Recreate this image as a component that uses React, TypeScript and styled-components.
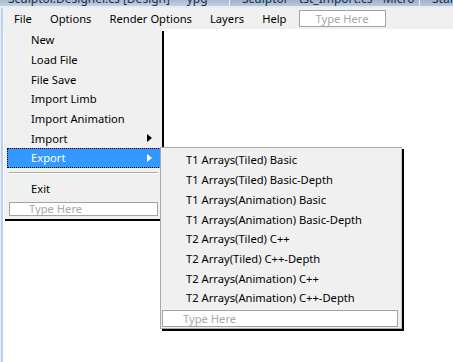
import React from 'react';
import styled, { createGlobalStyle } from 'styled-components';

const Global = createGlobalStyle`
  html, body { margin: 0; padding: 0; background: #fff; }
  body {
    width: 453px; height: 362px; overflow: hidden;
    font-family: "Noto Sans", "Open Sans", sans-serif;
    font-size: 11.2px; color: #000;
  }
`;

const Window = styled.div`
  display: flex; flex-direction: column;
  width: 453px; height: 362px; overflow: hidden;
`;

const TitleStrip = styled.div`
  height: 6px; display: flex; overflow: hidden;
  background: linear-gradient(#a9bbd0, #c2d0e0);
  border-bottom: 2px solid #e4ecf5;
`;

const TitleTab = styled.div<{ $w?: number; $tab?: boolean }>`
  flex: ${p => (p.$w ? 'none' : '1')};
  width: ${p => (p.$w ? `${p.$w}px` : 'auto')};
  display: flex; align-items: flex-end; overflow: hidden;
  padding-left: ${p => (p.$tab ? 12 : 8)}px;
  box-sizing: border-box;
  background: ${p => (p.$tab ? 'linear-gradient(#9fb3cb, #b7c8db)' : 'transparent')};
  border-left: ${p => (p.$tab ? '1px solid #e8eef6' : 'none')};
  span {
    line-height: 13px; font-size: 12px; color: #1b2f4b; white-space: nowrap;
    margin-bottom: 1px;
  }
`;

const Frame = styled.div`
  flex: 1; display: flex; min-height: 0;
`;

const LeftEdge = styled.div`
  width: 2px; flex: none;
  border-left: 1px solid #e6edf5;
  background: #bad3ee;
`;

const Content = styled.div`
  flex: 1; display: flex; flex-direction: column; min-width: 0;
`;

const MenuBar = styled.div`
  height: 21px; flex: none; display: flex; align-items: center;
  background: #f0f0f0; padding-left: 2px;
`;

const BarItem = styled.div`
  padding: 0 9px; white-space: nowrap;
`;

const TypeBox = styled.div<{ $w?: number; $h: number; $pad?: number; $center?: boolean; $ml: number; $mr?: number; $mt?: number }>`
  box-sizing: border-box;
  width: ${p => (p.$w ? `${p.$w}px` : 'auto')};
  height: ${p => p.$h}px;
  margin: ${p => p.$mt ?? 0}px ${p => p.$mr ?? 0}px 0 ${p => p.$ml}px;
  border: 1px solid #a3a3a3; background: #fff;
  color: #a8a8a8; white-space: nowrap;
  display: flex; align-items: center;
  justify-content: ${p => (p.$center ? 'center' : 'flex-start')};
  padding-left: ${p => p.$pad ?? 0}px;
  overflow: hidden;
`;

const Canvas = styled.div`
  flex: 1; background: #fff; position: relative;
`;

const Dropdown = styled.div`
  position: absolute; left: 0; top: 0; z-index: 2;
  width: 159px; box-sizing: border-box;
  background: #f0f0f0;
  border-left: 1px solid #fafafa;
  box-shadow: 2px 2px 0 #000;
  padding: 1px 0 3px;
  display: flex; flex-direction: column;
`;

const Item = styled.div<{ $active?: boolean; $sub?: boolean }>`
  position: relative;
  height: 19.7px; box-sizing: border-box; flex: none;
  margin: ${p => (p.$sub ? '0' : '0 1px 0 3px')};
  padding-left: ${p => (p.$sub ? 24 : 23)}px;
  display: flex; align-items: center; white-space: nowrap;
  border: 1px ${p => (p.$active ? 'dotted #000' : 'solid transparent')};
  background: ${p => (p.$active ? '#3399ff' : 'transparent')};
  color: ${p => (p.$active ? '#fff' : '#000')};
`;

const Arrow = styled.svg`
  position: absolute; right: 8px; top: 50%;
  width: 5px; height: 8px; margin-top: -4px;
`;

const Separator = styled.div`
  height: 11px; flex: none; display: flex; align-items: center;
  margin: 0 4px 0 5px;
  &::before {
    content: ''; flex: 1; height: 0;
    border-top: 1px solid #a8a8a8; border-bottom: 1px solid #fff;
  }
`;

const SubMenu = styled.div`
  position: absolute; left: 100%; top: -2px; z-index: 3;
  width: 242px; box-sizing: border-box;
  background: #f0f0f0;
  border: 1px solid #a8a8a8;
  border-right-color: #c8c8c8;
  box-shadow: 2px 2px 0 #000;
  padding: 2px 0 1px;
  display: flex; flex-direction: column;
`;

const TriRight = ({ color }: { color: string }) => (
  <Arrow viewBox="0 0 5 8">
    <path d="M0 0 L5 4 L0 8 Z" fill={color} />
  </Arrow>
);

const fileItems = ['New', 'Load File', 'File Save', 'Import Limb', 'Import Animation'];
const exportItems = [
  'T1 Arrays(Tiled) Basic',
  'T1 Arrays(Tiled) Basic-Depth',
  'T1 Arrays(Animation)  Basic',
  'T1 Arrays(Animation) Basic-Depth',
  'T2 Arrays(Tiled) C++',
  'T2 Array(Tiled) C++-Depth',
  'T2 Arrays(Animation) C++',
  'T2 Arrays(Animation) C++-Depth',
];

export default function App() {
  return (
    <>
      <Global />
      <Window>
        <TitleStrip>
          <TitleTab $w={229}><span>Sculptor.Designer.cs [Design]* - ypg</span></TitleTab>
          <TitleTab $w={190} $tab><span>Sculptor - tst_Import.cs - Micro</span></TitleTab>
          <TitleTab $tab><span>Start Page</span></TitleTab>
        </TitleStrip>
        <Frame>
          <LeftEdge />
          <Content>
            <MenuBar>
              <BarItem>File</BarItem>
              <BarItem>Options</BarItem>
              <BarItem>Render Options</BarItem>
              <BarItem>Layers</BarItem>
              <BarItem>Help</BarItem>
              <TypeBox $w={87} $h={17} $ml={3} $center>Type Here</TypeBox>
            </MenuBar>
            <Canvas>
              <Dropdown>
                {fileItems.map(t => (
                  <Item key={t}>{t}</Item>
                ))}
                <Item>
                  Import
                  <TriRight color="#000" />
                </Item>
                <Item $active>
                  Export
                  <TriRight color="#fff" />
                  <SubMenu>
                    {exportItems.map(t => (
                      <Item key={t} $sub>{t}</Item>
                    ))}
                    <TypeBox $h={17} $ml={1} $mr={3} $mt={2} $pad={20}>Type Here</TypeBox>
                  </SubMenu>
                </Item>
                <Separator />
                <Item>Exit</Item>
                <TypeBox $h={14} $ml={5} $mr={4} $mt={3} $pad={19}>Type Here</TypeBox>
              </Dropdown>
            </Canvas>
          </Content>
        </Frame>
      </Window>
    </>
  );
}
